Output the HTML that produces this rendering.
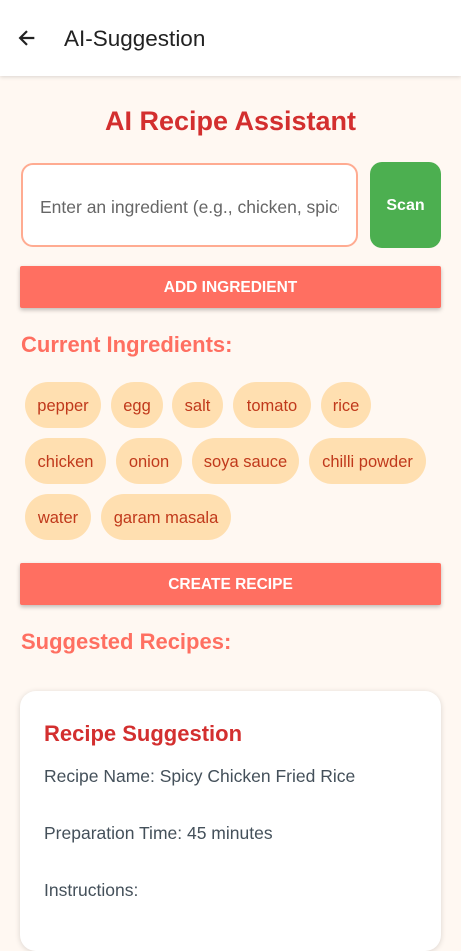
<!DOCTYPE html>
<html><head><style>
*{margin:0;padding:0;box-sizing:border-box}
body{width:461px;height:922px;overflow:hidden;background:#fff8f2;font-family:"Liberation Sans",sans-serif;position:relative}
.a{position:absolute}
.bar{left:0;top:0;width:461px;height:76px;background:#fff;box-shadow:0 1px 4px rgba(0,0,0,.15)}
.chip{position:absolute;height:46px;border-radius:23px;background:#ffdfb0;color:#c0391b;font-size:16.5px;line-height:48px;text-align:center}
.btn{position:absolute;left:20px;width:421px;height:42px;background:#ff6f61;color:#fff;font-weight:bold;font-size:15.5px;line-height:44px;text-align:center;box-shadow:0 2px 4px rgba(0,0,0,.25);border-radius:2px}
.h{color:#ff6f61;font-weight:bold;font-size:22px}
.t{color:#44505a;font-size:17.5px}
</style></head><body>
<div class="a bar"></div>
<svg class="a" style="left:16px;top:27px" width="22" height="22" viewBox="0 0 24 24"><path d="M20 12H5M12 4.5L4.5 12 12 19.5" stroke="#222" stroke-width="2.4" fill="none"/></svg>
<div class="a" style="left:64px;top:26px;font-size:22.5px;color:#222">AI-Suggestion</div>
<div class="a" style="left:0;width:461px;top:106px;text-align:center;color:#d32f2f;font-weight:bold;font-size:27px">AI Recipe Assistant</div>
<div class="a" style="left:21px;top:163px;width:337px;height:84px;border:2px solid #ffab91;border-radius:12px;background:#fff"></div>
<div class="a" style="left:40px;top:197px;width:299px;overflow:hidden;white-space:nowrap;color:#666;font-size:17.5px">Enter an ingredient (e.g., chicken, spices)</div>
<div class="a" style="left:370px;top:162px;width:71px;height:86px;background:#4caf50;border-radius:12px;color:#fff;font-weight:bold;font-size:16px;line-height:88px;text-align:center">Scan</div>
<div class="btn" style="top:266px">ADD INGREDIENT</div>
<div class="a h" style="left:21px;top:332px">Current Ingredients:</div>
<div class="chip" style="left:25px;top:382px;width:76px">pepper</div>
<div class="chip" style="left:111px;top:382px;width:52px">egg</div>
<div class="chip" style="left:172px;top:382px;width:51px">salt</div>
<div class="chip" style="left:233px;top:382px;width:78px">tomato</div>
<div class="chip" style="left:321px;top:382px;width:50px">rice</div>
<div class="chip" style="left:25px;top:438px;width:81px">chicken</div>
<div class="chip" style="left:116px;top:438px;width:66px">onion</div>
<div class="chip" style="left:192px;top:438px;width:107px">soya sauce</div>
<div class="chip" style="left:309px;top:438px;width:117px">chilli powder</div>
<div class="chip" style="left:25px;top:494px;width:66px">water</div>
<div class="chip" style="left:101px;top:494px;width:130px">garam masala</div>
<div class="btn" style="top:563px">CREATE RECIPE</div>
<div class="a h" style="left:21px;top:629px">Suggested Recipes:</div>
<div class="a" style="left:20px;top:691px;width:421px;height:260px;background:#fff;border-radius:16px;box-shadow:0 1px 6px rgba(0,0,0,.15)"></div>
<div class="a" style="left:44px;top:721px;color:#d32f2f;font-weight:bold;font-size:22px">Recipe Suggestion</div>
<div class="a t" style="left:44px;top:766px">Recipe Name: Spicy Chicken Fried Rice</div>
<div class="a t" style="left:44px;top:823px">Preparation Time: 45 minutes</div>
<div class="a t" style="left:44px;top:880px">Instructions:</div>
</body></html>
